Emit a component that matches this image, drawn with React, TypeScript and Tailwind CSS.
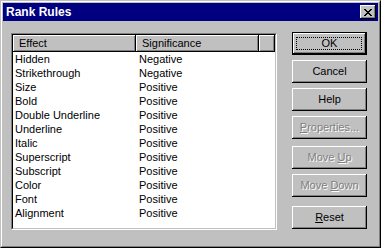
import React from "react";

const rows: [string, string][] = [
  ["Hidden", "Negative"],
  ["Strikethrough", "Negative"],
  ["Size", "Positive"],
  ["Bold", "Positive"],
  ["Double Underline", "Positive"],
  ["Underline", "Positive"],
  ["Italic", "Positive"],
  ["Superscript", "Positive"],
  ["Subscript", "Positive"],
  ["Color", "Positive"],
  ["Font", "Positive"],
  ["Alignment", "Positive"],
];

const raised =
  "shadow-[inset_-1px_-1px_#000,inset_1px_1px_#fff,inset_-2px_-2px_#808080]";

function Btn({
  children,
  disabled = false,
  isDefault = false,
  className = "",
}: {
  children: React.ReactNode;
  disabled?: boolean;
  isDefault?: boolean;
  className?: string;
}) {
  return (
    <div
      className={`relative h-[23px] w-[75px] bg-[#c0c0c0] ${
        isDefault
          ? "border border-black shadow-[inset_-1px_-1px_#000,inset_1px_1px_#fff,inset_-2px_-2px_#808080]"
          : raised
      } flex items-center justify-center text-[11px] leading-none ${
        disabled ? "text-[#808080] [text-shadow:1px_1px_0_#fff]" : "text-black"
      } ${className}`}
    >
      {children}
      {isDefault && (
        <div className="absolute left-[3px] right-[4px] top-[4px] bottom-[4px] border border-dotted border-black" />
      )}
    </div>
  );
}

export default function App() {
  return (
    <div
      className="w-[381px] h-[248px] border border-t-[#c0c0c0] border-l-[#c0c0c0] border-b-black border-r-black bg-[#c0c0c0]"
      style={{ fontFamily: '"Liberation Sans", Arial, sans-serif' }}
    >
      <div className="h-full border border-t-white border-l-white border-b-[#808080] border-r-[#808080] p-[1px] flex flex-col">
        {/* title bar */}
        <div className="h-[18px] bg-[#000080] flex items-center justify-between pl-[3px] pr-[2px]">
          <span className="text-white font-bold text-[12px] leading-none">Rank Rules</span>
          <div className={`w-[16px] h-[14px] bg-[#c0c0c0] ${raised} flex items-center justify-center`}>
            <svg width="8" height="7" viewBox="0 0 8 7" shapeRendering="crispEdges">
              <path
                d="M0 0h2v1h-2zM6 0h2v1h-2zM1 1h2v1h-2zM5 1h2v1h-2zM2 2h4v1h-4zM3 3h2v1h-2zM2 4h4v1h-4zM1 5h2v1h-2zM5 5h2v1h-2zM0 6h2v1h-2zM6 6h2v1h-2z"
                fill="#000"
              />
            </svg>
          </div>
        </div>

        {/* body */}
        <div className="flex items-start pl-[8px] pt-[11px]">
          {/* list view */}
          <div className="mt-[1px] w-[266px] h-[197px] border border-t-[#808080] border-l-[#808080] border-b-white border-r-white">
            <div className="h-full border border-t-black border-l-black border-b-[#c0c0c0] border-r-[#c0c0c0] bg-white overflow-hidden">
              <div className="flex h-[17px] text-[11px] leading-[17px] text-black">
                <div className={`w-[123px] bg-[#c0c0c0] ${raised} pl-[6px]`}>Effect</div>
                <div className={`w-[123px] bg-[#c0c0c0] ${raised} pl-[6px]`}>Significance</div>
                <div className={`flex-1 bg-[#c0c0c0] ${raised}`} />
              </div>
              <div className="flex flex-col">
                {rows.map(([a, b]) => (
                  <div key={a} className="flex h-[14px] text-[11px] leading-[14px] text-black">
                    <div className="w-[123px] pl-[2px]">{a}</div>
                    <div className="pl-[3px]">{b}</div>
                  </div>
                ))}
              </div>
            </div>
          </div>

          {/* buttons */}
          <div className="ml-[15px] flex flex-col">
            <Btn isDefault>OK</Btn>
            <Btn className="mt-[5px]">Cancel</Btn>
            <Btn className="mt-[5px]">Help</Btn>
            <Btn className="mt-[5px]" disabled>
              <span>
                <span className="underline">P</span>roperties...
              </span>
            </Btn>
            <Btn className="mt-[7px]" disabled>
              <span>
                Move <span className="underline">U</span>p
              </span>
            </Btn>
            <Btn className="mt-[5px]" disabled>
              <span>
                Move <span className="underline">D</span>own
              </span>
            </Btn>
            <Btn className="mt-[9px]">
              <span>
                <span className="underline">R</span>eset
              </span>
            </Btn>
          </div>
        </div>
      </div>
    </div>
  );
}
